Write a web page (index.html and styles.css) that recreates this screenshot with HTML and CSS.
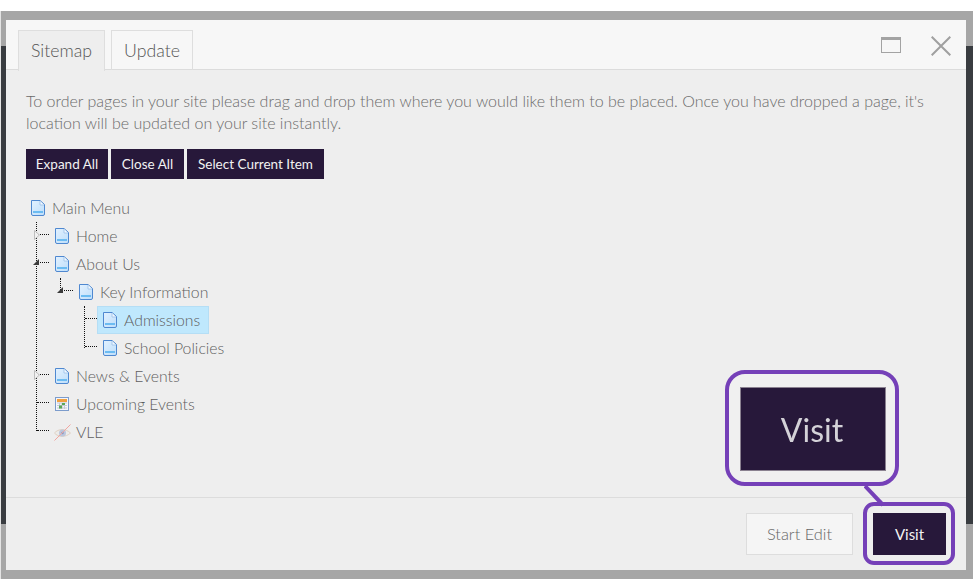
FILE: index.html
```html
<!DOCTYPE html>
<html lang="en">
<head>
<meta charset="utf-8">
<title>Sitemap</title>
<link rel="stylesheet" href="styles.css">
</head>
<body>
<div class="stage">
  <div class="side side-left"></div>
  <div class="side side-right"></div>
  <section class="dialog">
    <header class="dialog-head">
      <nav class="tabs">
        <span class="tab tab-active">Sitemap</span>
        <span class="tab">Update</span>
      </nav>
      <div class="win-controls">
        <svg class="ico-max" width="20" height="16" viewBox="0 0 20 16"><rect x="0.5" y="0.5" width="19" height="15" fill="none" stroke="#a3a3a3"/><rect x="0" y="0" width="20" height="3" fill="#a3a3a3"/></svg>
        <svg class="ico-close" width="20" height="20" viewBox="0 0 20 20"><path d="M0.7 0.7L19.3 19.3M19.3 0.7L0.7 19.3" fill="none" stroke="#a0a0a0" stroke-width="2"/></svg>
      </div>
    </header>
    <div class="dialog-body">
      <p class="intro">To order pages in your site please drag and drop them where you would like them to be placed. Once you have dropped a page, it's location will be updated on your site instantly.</p>
      <div class="actions">
        <button class="btn btn-expand">Expand All</button>
        <button class="btn btn-close">Close All</button>
        <button class="btn btn-select">Select Current Item</button>
      </div>
      <ul class="tree">
        <li class="node"><span class="row"><svg class="ico" viewBox="0 0 14 16"><use href="#page"/></svg><span class="label">Main Menu</span></span>
          <ul class="branch">
            <li class="node"><svg class="twist" viewBox="0 0 6 10"><use href="#tw-closed"/></svg><span class="row"><svg class="ico" viewBox="0 0 14 16"><use href="#page"/></svg><span class="label">Home</span></span></li>
            <li class="node"><svg class="twist twist-open" viewBox="0 0 6 6"><use href="#tw-open"/></svg><span class="row"><svg class="ico" viewBox="0 0 14 16"><use href="#page"/></svg><span class="label">About Us</span></span>
              <ul class="branch">
                <li class="node"><svg class="twist twist-open" viewBox="0 0 6 6"><use href="#tw-open"/></svg><span class="row"><svg class="ico" viewBox="0 0 14 16"><use href="#page"/></svg><span class="label">Key Information</span></span>
                  <ul class="branch">
                    <li class="node"><span class="row selected"><svg class="ico" viewBox="0 0 14 16"><use href="#page"/></svg><span class="label">Admissions</span></span></li>
                    <li class="node"><span class="row"><svg class="ico" viewBox="0 0 14 16"><use href="#page"/></svg><span class="label">School Policies</span></span></li>
                  </ul>
                </li>
              </ul>
            </li>
            <li class="node"><svg class="twist" viewBox="0 0 6 10"><use href="#tw-closed"/></svg><span class="row"><svg class="ico" viewBox="0 0 14 16"><use href="#page"/></svg><span class="label">News &amp; Events</span></span></li>
            <li class="node"><span class="row"><svg class="ico ico-cal" viewBox="0 0 14 14"><rect x="0.5" y="0.5" width="13" height="13" fill="#f4f6fb" stroke="#7c9ccc"/><rect x="2" y="2" width="10" height="3" fill="#f0a040"/><path d="M2 6H12M2 8.500H12M2 11H12M4.500 6V12M7 6V12M9.500 6V12" stroke="#c4c9d4" fill="none"/><rect x="7" y="6" width="3" height="2" fill="#58a858"/><rect x="4" y="8.500" width="3" height="3" fill="#58a858"/></svg><span class="label">Upcoming Events</span></span></li>
            <li class="node"><span class="row"><svg class="ico ico-vle" viewBox="0 0 17 17"><path d="M0.500 9C4 4.500 12 4.500 16.500 9C12 13.500 4 13.500 0.500 9Z" fill="#ececea" stroke="#e0d0c2"/><circle cx="8.500" cy="9" r="3.500" fill="#bcc6dc"/><circle cx="8.500" cy="9" r="1.300" fill="#8e9cc0"/><path d="M0.500 16.500L16.500 0.500" stroke="#f0a5a0" fill="none"/></svg><span class="label">VLE</span></span></li>
          </ul>
        </li>
      </ul>
    </div>
    <footer class="dialog-foot">
      <button class="btn btn-light">Start Edit</button>
      <button class="btn btn-visit">Visit</button>
    </footer>
  </section>
  <div class="ring"></div>
  <div class="callout"><div class="callout-btn"><span class="callout-text">Visit</span></div></div>
  <svg class="callout-tail" width="22" height="22" viewBox="0 0 22 22"><path d="M1 1L19 20" stroke="#7540b8" stroke-width="4" fill="none"/></svg>
</div>
<svg class="defs" width="0" height="0">
  <linearGradient id="pg" x1="0" y1="0" x2="1" y2="1"><stop offset="0" stop-color="#e2f1ff"/><stop offset="1" stop-color="#bedefa"/></linearGradient>
  <symbol id="page" viewBox="0 0 14 16">
    <path d="M0.500 0.500H9L13.500 4.500V14Q13.500 15.500 12 15.500H2Q0.500 15.500 0.500 14Z" fill="url(#pg)" stroke="#4f88d0"/>
    <path d="M9 1V5H13" fill="#f4f9ff" stroke="#a6c8ec"/>
    <rect x="2" y="11" width="10" height="2" fill="#6cbcf2"/>
  </symbol>
  <symbol id="tw-closed" viewBox="0 0 6 10"><path d="M0.500 0.500L5.500 5L0.500 9.500Z" fill="#f0f0f0" stroke="#bdbdbd"/></symbol>
  <symbol id="tw-open" viewBox="0 0 6 6"><path d="M6 0V6H0Z" fill="#3a3a3a"/></symbol>
</svg>
</body>
</html>
```
FILE: styles.css
```css
* { box-sizing: border-box; }
html, body { margin: 0; padding: 0; height: 100%; overflow: hidden; background: #fff; }
body { font-family: Lato, "Liberation Sans", sans-serif; font-weight: 300; color: #7b7b7b; }

.stage {
  position: relative;
  width: 973px;
  height: 568px;
  margin: 11px 0 0;
  padding: 9px 7px 0 6px;
  background: #a6a6a6;
  border-left: 1px solid #e4e4e4;
}
.side { position: absolute; top: 35px; height: 478px; background: #393c40; }
.side-left { left: 0; width: 5px; }
.side-right { right: 0; width: 7px; }

.dialog {
  position: relative;
  margin-left: -1px;
  width: 960px;
  height: 550px;
  background: #eee;
  display: flex;
  flex-direction: column;
}
.dialog-head {
  height: 50px;
  padding: 10px 15px 0 12px;
  background: #f7f7f7;
  border-bottom: 1px solid #dcdcdc;
  display: flex;
  justify-content: space-between;
}
.tabs { display: flex; gap: 6px; height: 40px; }
.tab {
  height: 40px;
  padding: 0 12px;
  border: 1px solid #dedede;
  border-bottom: 0;
  font-size: 17.7px;
  line-height: 40px;
  color: #555;
}
.tab-active { background: #eee; height: 41px; }
.win-controls { display: flex; gap: 30px; align-items: flex-start; padding-top: 6px; }
.ico-max { display: block; margin-top: 1px; }
.ico-close { display: block; }

.dialog-body { flex: 1; padding: 20px 20px 0; }
.intro { margin: 0; font-size: 16px; line-height: 22px; color: #6a6a6a; }
.actions { display: flex; gap: 3px; margin-top: 15px; }
.btn {
  height: 30px;
  padding: 0;
  border: 0;
  background: #27183a;
  color: #f2f2f2;
  font: 400 13.5px/30px Lato, "Liberation Sans", sans-serif;
}
.btn-expand { width: 82px; }
.btn-close { width: 73px; }
.btn-select { width: 137px; }

.tree, .branch { list-style: none; margin: 0; padding: 0; }
.tree { margin: 15px 0 0 -1px; }
.branch { padding-left: 24px; position: relative; }
.node { position: relative; }
.row { display: inline-flex; align-items: center; height: 28px; padding: 0 8px 0 6px; vertical-align: top; }
.ico { width: 14px; height: 16px; display: block; margin-right: 7px; flex: none; }
.ico-cal { height: 14px; }
.ico-vle { width: 17px; height: 17px; margin-left: -1px; margin-right: 5px; }
.label { font-size: 15.8px; color: #5e5e5e; line-height: 28px; }
.selected { padding-right: 9px; background: #bfe8fd; outline: 1px solid #b5def5; outline-offset: -1px; }

/* Dotted connectors of the tree */
.branch::before { content: ""; position: absolute; left: 11px; top: 0; border-left: 1px dotted #111; }
.tree > .node > .branch::before { bottom: 15px; }
.branch .branch::before { height: 12px; }
.branch .branch .branch::before { height: 42px; }
.branch > .node::before { content: ""; position: absolute; left: -12px; top: 12px; width: 12px; height: 1px; border-top: 1px dotted #111; }
.twist { position: absolute; left: -15px; top: 8px; width: 6px; height: 10px; z-index: 1; }
.twist-open { left: -16px; top: 9px; height: 6px; }

.dialog-foot {
  height: 73px;
  padding: 15px 20px 0;
  border-top: 1px solid #dcdcdc;
  display: flex;
  justify-content: flex-end;
  gap: 20px;
}
.btn-light { width: 107px; height: 42px; background: #f5f5f5; border: 1px solid #ddd; color: #666; font-size: 16.4px; font-weight: 300; line-height: 40px; }
.btn-visit { width: 73px; height: 42px; font-size: 15px; line-height: 42px; }

/* Annotation overlay */
.ring { position: absolute; left: 862px; top: 491px; width: 92px; height: 63px; border: 4px solid #7540b8; border-radius: 11px; }
.callout {
  position: absolute;
  left: 724px;
  top: 359px;
  width: 174px;
  height: 116px;
  padding: 13px 9px 13px 11px;
  background: #f0f0f0;
  border: 4px solid #7540b8;
  border-radius: 20px;
}
.callout-btn {
  height: 84px;
  padding-right: 2px;
  background: #27183a;
  border: 1px solid #8a8190;
  font-size: 32px;
  font-weight: 400;
  line-height: 84px;
  text-align: center;
}
.callout-text { color: #d4d2d8; filter: blur(0.5px); }
.callout-tail { position: absolute; left: 863px; top: 474px; }
.defs { position: absolute; }
```
